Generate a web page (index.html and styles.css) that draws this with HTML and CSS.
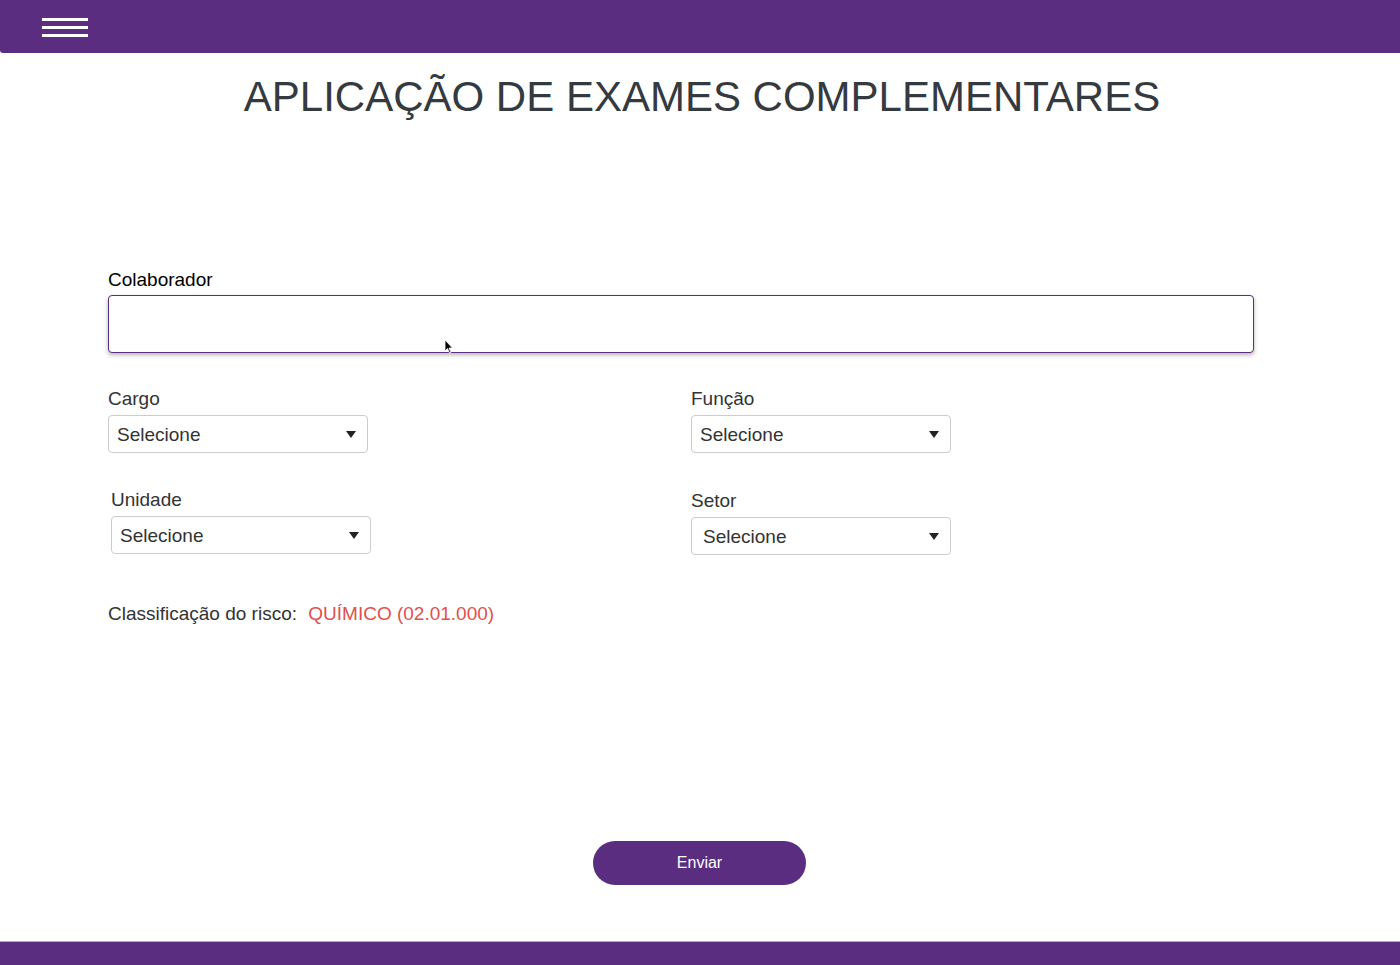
FILE: index.html
```html
<!DOCTYPE html>
<html lang="pt-BR">
<head>
<meta charset="utf-8">
<title>Aplicação de Exames Complementares</title>
<link rel="stylesheet" href="styles.css">
</head>
<body>
<header class="topbar">
  <button class="menu-btn" aria-label="Menu">
    <span></span><span></span><span></span>
  </button>
</header>
<main class="page">
  <h1 class="title">APLICAÇÃO DE EXAMES COMPLEMENTARES</h1>
  <form class="form">
    <div class="field-full">
      <label class="label-dark">Colaborador</label>
      <div class="input-wrap">
        <input class="text-input" type="text">
        <svg class="cursor" width="10" height="16" viewBox="0 0 10 16"><path d="M1 1 L1 12 L3.5 9.5 L5.5 14 L7 13.3 L5 9 L8.5 9 Z" fill="#000" stroke="#fff" stroke-width="0.8"/></svg>
      </div>
    </div>
    <div class="grid">
      <div class="field">
        <label>Cargo</label>
        <div class="select"><span>Selecione</span><i class="caret"></i></div>
      </div>
      <div class="field">
        <label>Função</label>
        <div class="select"><span>Selecione</span><i class="caret"></i></div>
      </div>
      <div class="field shift">
        <label>Unidade</label>
        <div class="select"><span>Selecione</span><i class="caret"></i></div>
      </div>
      <div class="field field-setor">
        <label>Setor</label>
        <div class="select select-setor"><span>Selecione</span><i class="caret"></i></div>
      </div>
    </div>
    <p class="risk">Classificação do risco: <span class="risk-value">QUÍMICO (02.01.000)</span></p>
    <div class="actions">
      <button type="button" class="btn">Enviar</button>
    </div>
  </form>
</main>
<footer class="bottombar"></footer>
</body>
</html>
```
FILE: styles.css
```css
* { box-sizing: border-box; }
html, body { margin: 0; padding: 0; }
body {
  font-family: "Liberation Sans", Arial, sans-serif;
  color: #333;
  background: #fff;
  height: 965px;
  display: flex;
  flex-direction: column;
  overflow: hidden;
}
.topbar {
  height: 53px;
  background: #5a2d81;
  border-bottom-left-radius: 3px;
  flex: 0 0 auto;
  display: flex;
  align-items: flex-start;
  padding-left: 42px;
}
.menu-btn {
  margin-top: 18px;
  width: 46px;
  padding: 0;
  border: 0;
  background: transparent;
  display: flex;
  flex-direction: column;
  gap: 5px;
}
.menu-btn span {
  display: block;
  height: 3px;
  background: #fff;
}
.page {
  flex: 1 1 auto;
}
.title {
  margin: 20px 0 0;
  text-align: center;
  font-weight: 400;
  font-size: 42px;
  line-height: 48px;
  color: #343a40;
  padding-left: 4px;
}
.form {
  margin: 149px 0 0 108px;
  width: 1146px;
}
.field-full label, .label-dark {
  display: block;
  font-size: 19px;
  line-height: 20px;
  color: #000;
  margin-bottom: 5px;
}
.input-wrap { position: relative; }
.text-input {
  display: block;
  width: 100%;
  height: 58px;
  border: 1px solid #5a2d81;
  border-radius: 4px;
  box-shadow: 0 2px 4px rgba(0,0,0,0.3);
  outline: none;
  font-family: inherit;
  font-size: 18px;
}
.cursor {
  position: absolute;
  left: 336px;
  top: 44px;
}
.grid {
  margin-top: 36px;
  display: grid;
  grid-template-columns: 583px 1fr;
  row-gap: 37px;
}
.field label {
  display: block;
  font-size: 19px;
  line-height: 20px;
  color: #333;
  margin-bottom: 6px;
}
.field.shift { padding-left: 3px; }
.field-setor { padding-top: 1px; }
.select {
  width: 260px;
  height: 38px;
  border: 1px solid #ccc;
  border-radius: 4px;
  display: flex;
  align-items: center;
  justify-content: space-between;
  padding: 2px 11px 0 8px;
  font-size: 19px;
  color: #333;
}
.select .caret { margin-top: -2px; }
.select-setor { padding-left: 11px; }
.caret {
  width: 0;
  height: 0;
  border-left: 5px solid transparent;
  border-right: 5px solid transparent;
  border-top: 7px solid #222;
}
.risk {
  margin: 49px 0 0;
  font-size: 19px;
  line-height: 20px;
  color: #333;
}
.risk-value {
  color: #e0514d;
  margin-left: 6px;
}
.actions {
  display: flex;
  justify-content: center;
  margin-top: 217px;
  padding-left: 37px;
}
.btn {
  width: 213px;
  height: 44px;
  border: 0;
  border-radius: 22px;
  background: #5a2d81;
  color: #fff;
  font-family: inherit;
  font-size: 16px;
}
.bottombar {
  flex: 0 0 24px;
  background: #5a2d81;
  border-top: 1px solid #b9a6cc;
}
```
